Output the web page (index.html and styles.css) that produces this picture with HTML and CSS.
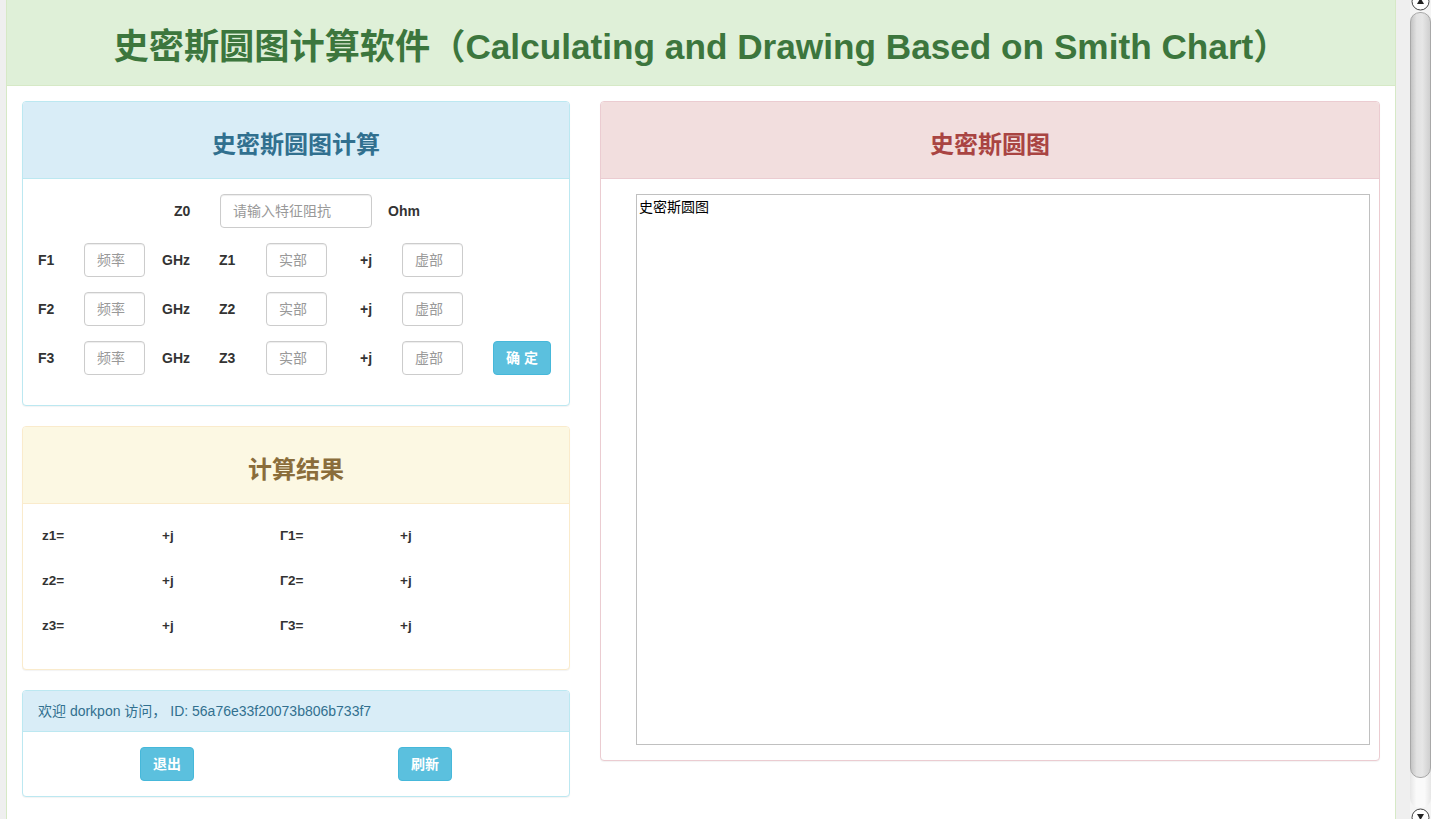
FILE: index.html
```html
<!DOCTYPE html>
<html lang="zh">
<head>
<meta charset="utf-8">
<title>史密斯圆图计算软件</title>
<link rel="stylesheet" href="styles.css">
</head>
<body>
<div class="viewport">
  <div class="page">
    <div class="app">
      <div class="app-heading">
        <h1 class="app-title">史密斯圆图计算软件（Calculating and Drawing Based on Smith Chart）</h1>
      </div>
      <div class="app-body">
        <div class="col-left">
          <div class="panel panel-info">
            <div class="panel-heading big"><h3 class="panel-title">史密斯圆图计算</h3></div>
            <div class="panel-body">
              <div class="form-row z0-row">
                <span></span>
                <label class="lbl">Z0</label>
                <input class="field wide" type="text" placeholder="请输入特征阻抗">
                <span class="lbl">Ohm</span>
              </div>
              <div class="form-row f-row">
                <label class="lbl">F1</label>
                <input class="field small" type="text" placeholder="频率">
                <span class="lbl">GHz</span>
                <label class="lbl">Z1</label>
                <input class="field small" type="text" placeholder="实部">
                <span class="lbl">+j</span>
                <input class="field small" type="text" placeholder="虚部">
                <span></span>
              </div>
              <div class="form-row f-row">
                <label class="lbl">F2</label>
                <input class="field small" type="text" placeholder="频率">
                <span class="lbl">GHz</span>
                <label class="lbl">Z2</label>
                <input class="field small" type="text" placeholder="实部">
                <span class="lbl">+j</span>
                <input class="field small" type="text" placeholder="虚部">
                <span></span>
              </div>
              <div class="form-row f-row">
                <label class="lbl">F3</label>
                <input class="field small" type="text" placeholder="频率">
                <span class="lbl">GHz</span>
                <label class="lbl">Z3</label>
                <input class="field small" type="text" placeholder="实部">
                <span class="lbl">+j</span>
                <input class="field small" type="text" placeholder="虚部">
                <button class="btn" type="button">确 定</button>
              </div>
            </div>
          </div>

          <div class="panel panel-warning">
            <div class="panel-heading big"><h3 class="panel-title">计算结果</h3></div>
            <div class="panel-body">
              <div class="res-row"><span>z1=</span><span>+j</span><span>Γ1=</span><span>+j</span></div>
              <div class="res-row"><span>z2=</span><span>+j</span><span>Γ2=</span><span>+j</span></div>
              <div class="res-row"><span>z3=</span><span>+j</span><span>Γ3=</span><span>+j</span></div>
            </div>
          </div>

          <div class="panel panel-info last">
            <div class="panel-heading">欢迎 dorkpon 访问， ID: 56a76e33f20073b806b733f7</div>
            <div class="panel-body user-actions">
              <div class="half"><button class="btn" type="button">退出</button></div>
              <div class="half"><button class="btn" type="button">刷新</button></div>
            </div>
          </div>
        </div>

        <div class="col-right">
          <div class="panel panel-danger">
            <div class="panel-heading big"><h3 class="panel-title">史密斯圆图</h3></div>
            <div class="panel-body">
              <div class="chart-box">史密斯圆图</div>
            </div>
          </div>
        </div>
      </div>
    </div>
  </div>
  <div class="scrollbar">
    <svg class="sb-arrow" width="21" height="11" viewBox="0 0 21 11">
      <circle cx="10.5" cy="1.5" r="8.5" fill="#fff" stroke="#444" stroke-width="1"/>
      <path d="M10.5 -2 L14 4 L7 4 Z" fill="#222"/>
    </svg>
    <div class="sb-track"><div class="sb-thumb"></div></div>
    <svg class="sb-arrow" width="21" height="11" viewBox="0 0 21 11">
      <circle cx="10.5" cy="9.5" r="8.5" fill="#fff" stroke="#444" stroke-width="1"/>
      <path d="M7 6 L14 6 L10.5 12 Z" fill="#222"/>
    </svg>
  </div>
</div>
</body>
</html>
```

FILE: styles.css
```css
* { box-sizing: border-box; }
html, body {
  margin: 0;
  padding: 0;
  height: 819px;
  overflow: hidden;
}
body {
  background: #efefef;
  font-family: "Liberation Sans", "Noto Sans CJK SC", sans-serif;
  font-size: 14px;
  line-height: 20px;
  color: #333;
}
.viewport {
  display: flex;
  height: 819px;
}
.page {
  width: 1410px;
  padding-left: 6px;
  height: 819px;
  overflow: hidden;
}
.app {
  width: 1390px;
  height: 900px;
  background: #fff;
  border: 1px solid #d6e9c6;
  border-top: 0;
}
.app-heading {
  height: 86px;
  background: #dff0d8;
  border-bottom: 1px solid #d6e9c6;
  padding-top: 8px;
  display: flex;
  align-items: center;
  justify-content: center;
}
.app-title {
  margin: 0;
  font-size: 35.2px;
  line-height: 40px;
  font-weight: bold;
  color: #3c763d;
  white-space: nowrap;
}
.app-body {
  display: grid;
  grid-template-columns: 548px 780px;
  column-gap: 30px;
  padding: 15px;
  align-items: start;
}
.panel {
  border: 1px solid #ddd;
  border-radius: 4px;
  background: #fff;
  box-shadow: 0 1px 1px rgba(0,0,0,0.05);
  margin-bottom: 20px;
}
.panel-heading {
  padding: 10px 15px;
  border-bottom: 1px solid transparent;
  border-top-left-radius: 3px;
  border-top-right-radius: 3px;
}
.panel-heading.big { text-align: center; }
.panel-title {
  margin: 20px 0 10px;
  font-size: 24px;
  line-height: 26px;
  font-weight: bold;
}
.panel-body { padding: 15px; }

.panel-info { border-color: #bce8f1; }
.panel-info .panel-heading { background: #d9edf7; border-color: #bce8f1; color: #31708f; }
.panel-warning { border-color: #faebcc; }
.panel-warning .panel-heading { background: #fcf8e3; border-color: #faebcc; color: #8a6d3b; }
.panel-danger { border-color: #ebccd1; }
.panel-danger .panel-heading { background: #f2dede; border-color: #ebccd1; color: #a94442; }

.form-row {
  display: grid;
  align-items: center;
  height: 34px;
  margin-bottom: 15px;
}
.z0-row { grid-template-columns: 136px 46px 168px auto; }
.f-row { grid-template-columns: 46px 78px 57px 47px 94px 42px 91px 58px; }
.lbl {
  font-weight: bold;
  font-size: 14px;
  color: #333;
}
.field {
  height: 34px;
  padding: 6px 12px;
  border: 1px solid #ccc;
  border-radius: 4px;
  font-family: "Liberation Sans", "Noto Sans CJK SC", sans-serif;
  font-size: 14px;
  color: #555;
  background: #fff;
  box-shadow: inset 0 1px 1px rgba(0,0,0,0.075);
}
.field::placeholder { color: #999; }
.field.wide { width: 152px; }
.field.small { width: 61px; }
.btn {
  height: 34px;
  padding: 6px 12px;
  border: 1px solid #46b8da;
  border-radius: 4px;
  background: #5bc0de;
  color: #fff;
  font-family: "Liberation Sans", "Noto Sans CJK SC", sans-serif;
  font-size: 14px;
  font-weight: bold;
  line-height: 20px;
}

.res-row {
  display: grid;
  grid-template-columns: 120px 118px 120px auto;
  align-items: center;
  height: 34px;
  margin-bottom: 11px;
  padding-left: 4px;
  font-size: 13.5px;
  font-weight: bold;
  color: #333;
}

.user-actions {
  display: flex;
}
.half {
  flex: 1;
  display: flex;
  justify-content: center;
}

.chart-box {
  margin-left: 20px;
  width: 734px;
  height: 551px;
  border: 1px solid #c0c0c0;
  padding: 2px 2px 0;
  font-family: "Noto Sans CJK SC", sans-serif;
  font-size: 14px;
  line-height: 18px;
  color: #000;
}

.scrollbar {
  width: 21px;
  height: 819px;
  display: flex;
  flex-direction: column;
  background: #f4f4f4;
}
.sb-arrow {
  display: block;
  flex: none;
}
.sb-track {
  flex: 1;
  padding: 1px 0 30px;
  background: linear-gradient(to right, #e6e6e6, #fafafa 30%, #fafafa 70%, #e6e6e6);
  border-radius: 10px;
}
.sb-thumb {
  height: 100%;
  border-radius: 10px;
  border: 1px solid #a8a8a8;
  background: linear-gradient(to right, #c4c4c4, #e2e2e2 30%, #e6e6e6 60%, #cfcfcf);
}
```
